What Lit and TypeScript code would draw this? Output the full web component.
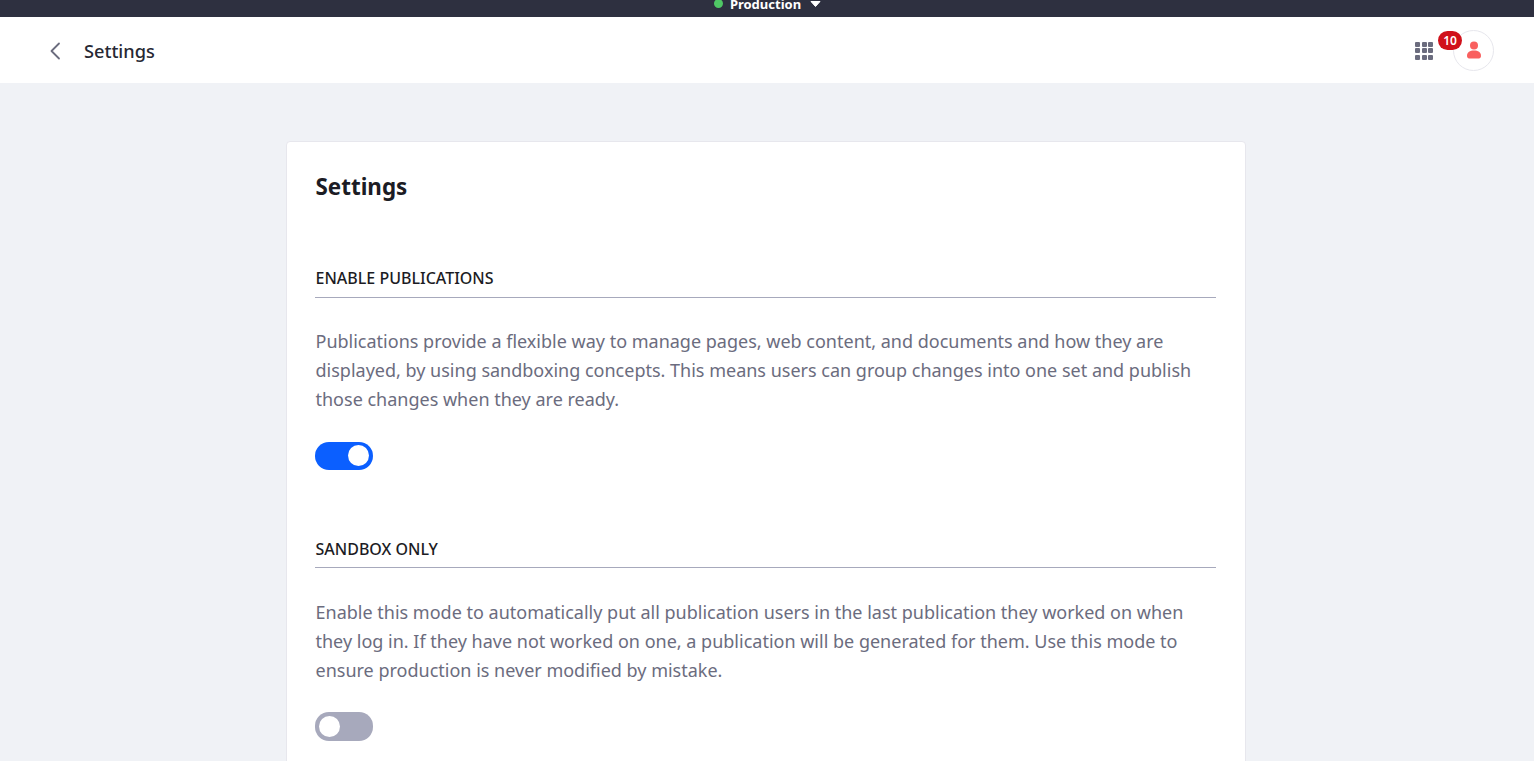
import { LitElement, html, css } from "lit";
import { customElement } from "lit/decorators.js";

@customElement("app-root")
export class AppRoot extends LitElement {
  static styles = css`
    :host { display: block; height: 761px; overflow: hidden; background: #f0f2f6; font-family: "Noto Sans", "Open Sans", sans-serif; color: #272833; }
    .top { height: 17px; background: #2e3040; display: flex; justify-content: center; overflow: hidden; }
    .env { display: flex; align-items: center; height: 8px; color: #fff; font-size: 13px; font-weight: 700; margin-left: 1px; }
    .dot { width: 9px; height: 9px; border-radius: 50%; background: #4fc765; margin-right: 7px; margin-top: -1px; }
    .caret { margin-left: 9px; margin-top: -1px; display: block; }
    .header { height: 66px; background: #fff; display: flex; align-items: center; padding: 0 40px 0 49px; }
    .back { display: block; margin: 1px 23px 0 0; }
    .header h1 { margin: 2px 0 0; font-size: 18.2px; font-weight: 500; flex: 1; color: #272833; }
    .apps { display: grid; grid-template-columns: repeat(3, 5px); gap: 1.500px; margin: 1px 20px 0 0; }
    .apps i { width: 5px; height: 5px; background: #6b6c7e; border-radius: 1px; }
    .user { position: relative; width: 39px; height: 39px; border: 1px solid #e7e7ed; border-radius: 50%; display: flex; align-items: center; justify-content: center; }
    .badge { position: absolute; left: -16px; top: 0; width: 24px; height: 19px; border-radius: 10px; background: #d0111b; color: #fff; font-size: 12px; font-weight: 600; display: flex; align-items: center; justify-content: center; }
    .card { box-sizing: border-box; width: 960px; margin: 58px 0 0 286px; padding: 29px 29px 0 28px; height: 700px; background: #fff; border: 1px solid #e7e7ed; border-radius: 4px; }
    h2 { margin: 0 0 62.800px; padding-left: 0.5px; font-size: 22.400px; line-height: 32px; font-weight: 700; color: #1c1c24; }
    h3 { margin: 0; padding: 0 0 7px 0.5px; font-size: 16px; line-height: 24px; font-weight: 500; border-bottom: 1px solid #a7a9bc; color: #1c1c24; }
    p { margin: 29px 0 28px; padding-left: 0.5px; font-size: 18px; line-height: 29px; color: #6b6c7e; }
    .toggle { width: 58px; height: 28px; border-radius: 14px; display: flex; align-items: center; padding: 0 4px; box-sizing: border-box; }
    .toggle i { width: 21px; height: 21px; border-radius: 50%; background: #fff; }
    .on { background: #0b5fff; justify-content: flex-end; margin-bottom: 66.500px; }
    .off { background: #a7a9bc; height: 29px; }
    .sandbox h3 { padding-top: 1px; padding-bottom: 6px; }
    .sandbox p { margin-top: 30px; margin-bottom: 27px; }
  `;

  render() {
    return html`
      <div class="top">
        <div class="env">
          <span class="dot"></span><span>Production</span>
          <svg class="caret" width="11" height="6" viewBox="0 0 11 6"><path d="M1 .5h9L5.500 5.500z" fill="#fff" stroke="#fff" stroke-linejoin="round"/></svg>
        </div>
      </div>
      <div class="header">
        <svg class="back" width="12" height="18" viewBox="0 0 12 18"><path d="M10 1.500 2.500 9l7.500 7.500" fill="none" stroke="#6b6c7e" stroke-width="1.800" stroke-linecap="round" stroke-linejoin="round"/></svg>
        <h1>Settings</h1>
        <div class="apps">${Array.from({ length: 9 }, () => html`<i></i>`)}</div>
        <div class="user">
          <span class="badge">10</span>
          <svg width="16" height="18" viewBox="0 0 16 18"><circle cx="8" cy="4.500" r="4" fill="#f9605f"/><path d="M1 15c0-4 3-5.500 7-5.500s7 1.500 7 5.500c0 2-1.500 2.500-3 2.500H4c-1.500 0-3-.5-3-2.500z" fill="#f9605f"/></svg>
        </div>
      </div>
      <div class="card">
        <h2>Settings</h2>
        <section>
          <h3>ENABLE PUBLICATIONS</h3>
          <p>Publications provide a flexible way to manage pages, web content, and documents and how they are displayed, by using sandboxing concepts. This means users can group changes into one set and publish those changes when they are ready.</p>
          <div class="toggle on"><i></i></div>
        </section>
        <section class="sandbox">
          <h3>SANDBOX ONLY</h3>
          <p>Enable this mode to automatically put all publication users in the last publication they worked on when they log in. If they have not worked on one, a publication will be generated for them. Use this mode to ensure production is never modified by mistake.</p>
          <div class="toggle off"><i></i></div>
        </section>
      </div>
    `;
  }
}
